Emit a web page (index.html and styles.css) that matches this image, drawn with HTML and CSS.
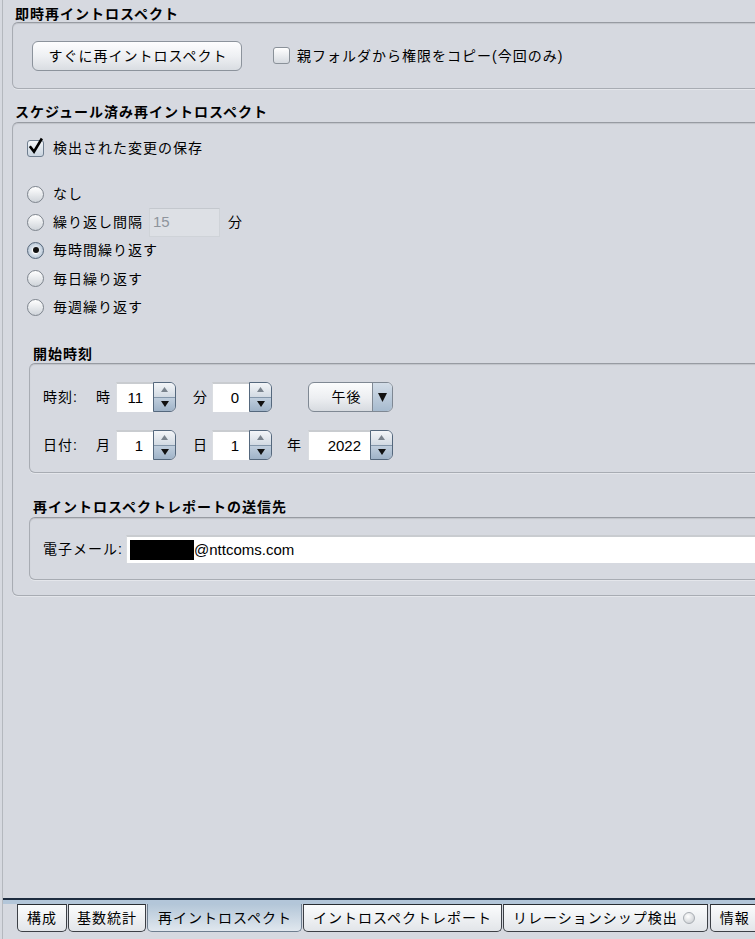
FILE: index.html
```html
<!DOCTYPE html>
<html lang="ja">
<head>
<meta charset="utf-8">
<title>再イントロスペクト</title>
<link rel="stylesheet" href="styles.css">
</head>
<body>
<div class="app">
  <div class="content">
    <div class="group-title t1">即時再イントロスペクト</div>
    <div class="panel panel-now">
      <div class="btn">すぐに再イントロスペクト</div>
      <div class="check-row">
        <span class="box"></span>
        <span>親フォルダから権限をコピー(今回のみ)</span>
      </div>
    </div>

    <div class="group-title t2">スケジュール済み再イントロスペクト</div>
    <div class="panel panel-sched">
      <div class="row row-save">
        <span class="box checked"><svg width="18" height="20" viewBox="0 0 18 20"><path d="M3.6 10.2 L7 14.6 L14.2 2.6" fill="none" stroke="#000" stroke-width="2.6" stroke-linecap="square"/></svg></span>
        <span>検出された変更の保存</span>
      </div>
      <div class="radios">
        <div class="row"><span class="radio"></span><span>なし</span></div>
        <div class="row"><span class="radio"></span><span>繰り返し間隔</span><span class="field-disabled">15</span><span class="unit">分</span></div>
        <div class="row"><span class="radio on"><span class="dot"></span></span><span>毎時間繰り返す</span></div>
        <div class="row"><span class="radio"></span><span>毎日繰り返す</span></div>
        <div class="row"><span class="radio"></span><span>毎週繰り返す</span></div>
      </div>

      <div class="subgroup">
        <div class="group-title sub t3">開始時刻</div>
        <div class="panel panel-time">
          <div class="time-grid">
            <span class="lbl">時刻:</span>
            <span class="lbl">時</span>
            <div class="spinner s-small">
              <span class="spin-field">11</span>
              <span class="spin-btns">
                <span class="spin-up"><svg width="7" height="5" viewBox="0 0 7 5"><polygon points="3.5,0 7,5 0,5" fill="#7a838d"/></svg></span>
                <span class="spin-down"><svg width="8" height="6" viewBox="0 0 8 6"><polygon points="0,0 8,0 4,6" fill="#111"/></svg></span>
              </span>
            </div>
            <span class="lbl gap">分</span>
            <div class="spinner s-small">
              <span class="spin-field">0</span>
              <span class="spin-btns">
                <span class="spin-up"><svg width="7" height="5" viewBox="0 0 7 5"><polygon points="3.5,0 7,5 0,5" fill="#7a838d"/></svg></span>
                <span class="spin-down"><svg width="8" height="6" viewBox="0 0 8 6"><polygon points="0,0 8,0 4,6" fill="#111"/></svg></span>
              </span>
            </div>
            <span class="lbl"></span>
            <div class="combo">
              <span class="combo-text">午後</span>
              <span class="combo-arrow"><svg width="9" height="9" viewBox="0 0 9 9"><polygon points="0,0 9,0 4.5,9" fill="#111"/></svg></span>
            </div>

            <span class="lbl">日付:</span>
            <span class="lbl">月</span>
            <div class="spinner s-small">
              <span class="spin-field">1</span>
              <span class="spin-btns">
                <span class="spin-up"><svg width="7" height="5" viewBox="0 0 7 5"><polygon points="3.5,0 7,5 0,5" fill="#7a838d"/></svg></span>
                <span class="spin-down"><svg width="8" height="6" viewBox="0 0 8 6"><polygon points="0,0 8,0 4,6" fill="#111"/></svg></span>
              </span>
            </div>
            <span class="lbl gap">日</span>
            <div class="spinner s-small">
              <span class="spin-field">1</span>
              <span class="spin-btns">
                <span class="spin-up"><svg width="7" height="5" viewBox="0 0 7 5"><polygon points="3.5,0 7,5 0,5" fill="#7a838d"/></svg></span>
                <span class="spin-down"><svg width="8" height="6" viewBox="0 0 8 6"><polygon points="0,0 8,0 4,6" fill="#111"/></svg></span>
              </span>
            </div>
            <span class="lbl gap2">年</span>
            <div class="spinner s-wide">
              <span class="spin-field">2022</span>
              <span class="spin-btns">
                <span class="spin-up"><svg width="7" height="5" viewBox="0 0 7 5"><polygon points="3.5,0 7,5 0,5" fill="#7a838d"/></svg></span>
                <span class="spin-down"><svg width="8" height="6" viewBox="0 0 8 6"><polygon points="0,0 8,0 4,6" fill="#111"/></svg></span>
              </span>
            </div>
          </div>
        </div>

        <div class="group-title sub t4">再イントロスペクトレポートの送信先</div>
        <div class="panel panel-mail">
          <span class="mail-lbl">電子メール:</span>
          <div class="mail-field"><span class="redact"></span><span class="mail-text">@nttcoms.com</span></div>
        </div>
      </div>
    </div>
  </div>

  <div class="tabbar">
    <div class="tab-band"></div>
    <div class="tabs">
      <div class="tab">構成</div>
      <div class="tab">基数統計</div>
      <div class="tab active">再イントロスペクト</div>
      <div class="tab">イントロスペクトレポート</div>
      <div class="tab tab-rel">リレーションシップ検出<span class="status-dot"></span></div>
      <div class="tab">情報</div>
    </div>
  </div>
</div>
</body>
</html>
```

FILE: styles.css
```css
* { box-sizing: border-box; }
html, body { margin: 0; padding: 0; }
body {
  width: 755px;
  height: 939px;
  overflow: hidden;
  background: #d6d9e0;
  font-family: "Liberation Sans", "Noto Sans CJK JP", sans-serif;
  font-size: 14px;
  line-height: 16px;
  letter-spacing: 1px;
  color: #000;
}
.app {
  margin-left: 2px;
  border-left: 1px solid #b4b8be;
  height: 939px;
  display: flex;
  flex-direction: column;
}
.content { padding-left: 9px; }

.group-title {
  font-weight: bold;
  padding-left: 3px;
  height: 16px;
  line-height: 16px;
  white-space: nowrap;
}
.group-title.t1 { margin-top: 6px; }
.group-title.t2 { margin-top: 15px; margin-bottom: 2px; }
.group-title.sub { padding-left: 4px; }
.group-title.t3 { margin-top: 25px; margin-bottom: 1px; }
.group-title.t4 { margin-top: 26px; margin-bottom: 2px; }

.panel {
  border: 1px solid #a8acb3;
  border-top-color: #979ba2;
  border-radius: 6px;
  box-shadow: inset 0 1px 1px rgba(0,0,0,0.10), 0 1px 0 rgba(255,255,255,0.35);
  margin-right: -30px;
}

/* panel 1 */
.panel-now {
  display: flex;
  align-items: center;
  padding: 17px 0 17px 19px;
  height: 67px;
}
.btn {
  width: 210px;
  height: 30px;
  border: 1px solid #8c939c;
  border-radius: 6px;
  background: linear-gradient(#fdfdfe 0%, #eef0f3 50%, #d9dde2 100%);
  display: flex;
  align-items: center;
  justify-content: center;
  white-space: nowrap;
  padding-left: 2px;
}
.check-row {
  display: flex;
  align-items: center;
  margin-left: 31px;
  white-space: nowrap;
}
.box {
  width: 17px;
  height: 17px;
  border: 1px solid #8a9199;
  border-radius: 3px;
  background: linear-gradient(#ffffff, #d6dae0);
  margin-right: 7px;
  position: relative;
  flex: none;
}
.box.checked { border-color: #6f7e8f; background: linear-gradient(#f4f7fa, #c9d4df); }
.box svg { position: absolute; left: -1px; top: -4px; }

/* panel 2 */
.panel-sched {
  padding: 11px 0 15px 0;
}
.row {
  display: flex;
  align-items: center;
  height: 28px;
  padding-left: 14px;
  white-space: nowrap;
}
.row-save .box { margin-right: 9px; }
.radios { margin-top: 18px; }
.radios .row:nth-child(3), .radios .row:nth-child(4) { height: 28.5px; }
.radio {
  width: 17px;
  height: 17px;
  border-radius: 50%;
  border: 1px solid #7d848d;
  background: linear-gradient(#ffffff, #cfd4da);
  margin-right: 9px;
  flex: none;
  display: flex;
  align-items: center;
  justify-content: center;
}
.radio.on {
  border-color: #56677a;
  background: radial-gradient(circle, #ffffff 0 3px, #dde5ee 4px, #9fb2c6 100%);
}
.radio .dot {
  width: 6px;
  height: 6px;
  border-radius: 50%;
  background: #111;
}
.field-disabled {
  width: 71px;
  height: 29px;
  margin-left: 6px;
  background: #dde0e5;
  border: 1px solid #cfd3d8;
  border-top-color: #c4c8ce;
  color: #8e949c;
  font-size: 15px;
  letter-spacing: 0;
  padding-left: 3px;
  display: flex;
  align-items: center;
}
.unit { margin-left: 8px; }

.subgroup { margin-left: 16px; }

/* panel 3 */
.panel-time {
  padding: 18px 0 12px 13px;
}
.time-grid {
  display: grid;
  grid-template-columns: 53px 20px 60px 36px 60px 36px 85px;
  grid-template-rows: 30px 30px;
  row-gap: 18px;
  align-items: center;
}
.lbl { white-space: nowrap; }
.lbl.gap { padding-left: 17px; }
.lbl.gap2 { padding-left: 15px; }

.spinner {
  display: flex;
  height: 30px;
}
.s-small { width: 60px; }
.s-wide { width: 85px; }
.spin-field {
  flex: 1;
  background: #fff;
  border-top: 2px solid #c9ccd0;
  border-left: 1px solid #dadde1;
  text-align: right;
  padding-right: 10px;
  font-size: 15px;
  letter-spacing: 0;
  line-height: 27px;
}
.s-wide .spin-field { padding-right: 9px; }
.spin-btns {
  width: 23px;
  flex: none;
  display: flex;
  flex-direction: column;
  border: 1px solid #55687d;
  border-radius: 0 6px 6px 0;
  overflow: hidden;
}
.spin-up, .spin-down {
  flex: 1;
  display: flex;
  align-items: center;
  justify-content: center;
}
.spin-up {
  background: linear-gradient(#f3f5f8, #d2dae3);
  border-bottom: 1px solid #8497ab;
}
.spin-down {
  background: linear-gradient(#c0cedd, #9fb3c8);
}

.combo {
  width: 85px;
  height: 30px;
  border: 1px solid #7f8893;
  border-radius: 6px;
  display: flex;
  overflow: hidden;
  background: linear-gradient(#fbfcfd 0%, #eceef1 55%, #d7dbe0 100%);
}
.combo-text {
  flex: 1;
  display: flex;
  align-items: center;
  justify-content: center;
  padding-left: 12px;
}
.combo-arrow {
  width: 20px;
  flex: none;
  border-left: 1px solid #7f8893;
  background: linear-gradient(#d3dde8, #a7bbcf);
  display: flex;
  align-items: center;
  justify-content: center;
}

/* panel 4 */
.panel-mail {
  display: flex;
  align-items: center;
  padding: 17px 0 16px 13px;
}
.mail-lbl { width: 83px; flex: none; white-space: nowrap; }
.mail-field {
  flex: 1;
  height: 28px;
  background: #fff;
  border-top: 2px solid #c9ccd0;
  border-left: 1px solid #dadde1;
  display: flex;
  align-items: center;
  padding-left: 3px;
}
.redact {
  width: 64px;
  height: 20px;
  background: #000;
  flex: none;
}
.mail-text {
  font-size: 15px;
  letter-spacing: 0;
}

/* tabs */
.tabbar {
  margin-top: auto;
  border-top: 2px solid #1d2c3f;
}
.tab-band {
  height: 4px;
  background: #b3c6d9;
}
.tabs {
  display: flex;
  padding-left: 14px;
  height: 35px;
}
.tab {
  height: 28px;
  padding: 0 9px;
  margin-right: 1px;
  border: 1px solid #3c4046;
  border-top: 1px solid #2a2d31;
  border-radius: 0 0 5px 5px;
  background: linear-gradient(#fbfcfd, #e2e5e9);
  display: flex;
  align-items: center;
  white-space: nowrap;
}
.tab:nth-child(2) { padding: 0 8px; }
.tab.active {
  border-color: #6e7e8f;
  border-top: none;
  padding: 0 9px 0 10px;
  background: linear-gradient(#b3c6d8, #e0e7ee);
}
.tab-rel { padding: 0 12px 0 9px; margin-right: 2px; }
.status-dot {
  width: 12px;
  height: 12px;
  border-radius: 50%;
  border: 1px solid #a7acb2;
  background: radial-gradient(circle at 40% 35%, #ffffff, #c3c7cc);
  margin-left: 5px;
}
```
